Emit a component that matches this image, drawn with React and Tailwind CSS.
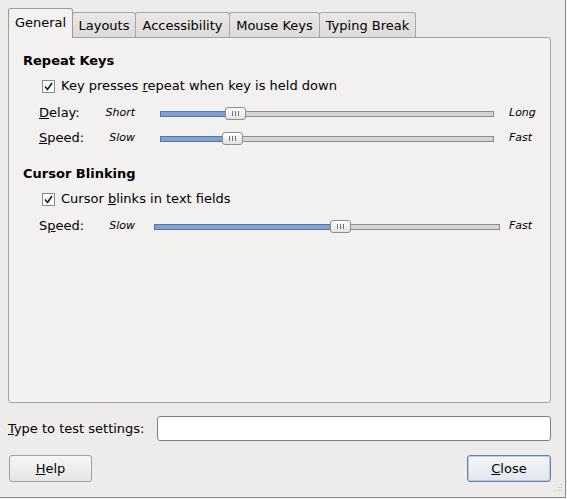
import React from 'react';

const Check = () => (
  <span className="flex h-[13px] w-[13px] items-center justify-center border border-[#8a8a8a] bg-white">
    <svg width="11" height="11" viewBox="0 0 11 11">
      <path d="M2 5.5 L4.5 8.5 L9 2" fill="none" stroke="#1a1a1a" strokeWidth="1.6" />
    </svg>
  </span>
);

const Slider = ({ width, value }) => (
  <div className="relative h-[13px]" style={{ width }}>
    <div className="absolute left-0 right-0 top-[4px] h-[6px] border border-[#8c8c8c] bg-[#d6d5d3]"></div>
    <div
      className="absolute left-0 top-[4px] h-[6px] border border-[#56779f] bg-[#7ea2d4]"
      style={{ width: value + 2 }}
    ></div>
    <div
      className="absolute top-0 flex h-[13px] w-[21px] items-center justify-center gap-[2px] rounded-[3px] border border-[#8e8e8e] bg-gradient-to-b from-white to-[#e4e3e1]"
      style={{ left: value }}
    >
      <span className="h-[5px] w-px bg-[#6f6f6f]"></span>
      <span className="h-[5px] w-px bg-[#6f6f6f]"></span>
      <span className="h-[5px] w-px bg-[#6f6f6f]"></span>
    </div>
  </div>
);

const tabs = [
  { name: 'Layouts', w: 'w-[64px]' },
  { name: 'Accessibility', w: 'w-[95px]' },
  { name: 'Mouse Keys', w: 'w-[91px]' },
  { name: 'Typing Break', w: 'w-[97px]' },
];

const App = () => {
  return (
    <div
      className="h-[499px] w-[567px] overflow-hidden bg-[#f4f3f2] text-[13px] text-black"
      style={{ fontFamily: '"DejaVu Sans", Verdana, sans-serif' }}
    >
      <div className="h-[498px] w-[566px] border-b border-r border-[#8a8a8a] bg-[#edeceb] pt-[8px]">
        {/* Tabs */}
        <div className="flex items-end pl-[8px]">
          <div className="relative z-10 -mb-px flex h-[30px] w-[65px] items-center justify-center rounded-t-[3px] border border-b-0 border-[#9c9c9c] bg-[#f3f2f1] pb-[2px]">
            General
          </div>
          {tabs.map((t) => (
            <div
              key={t.name}
              className={`flex h-[25px] ${t.w} -ml-px items-center justify-center rounded-t-[3px] border border-b-0 border-[#a8a8a8] bg-gradient-to-b from-[#e9e8e7] to-[#dcdbda] pt-px`}
            >
              {t.name}
            </div>
          ))}
        </div>

        {/* Panel */}
        <div className="ml-[8px] h-[366px] w-[543px] rounded-b-[3px] rounded-tr-[3px] border border-[#a3a3a3] bg-[#f2f1f0] pt-[14px]">
          <div className="flex h-[18px] items-center pl-[14px] font-bold">Repeat Keys</div>
          <div className="mt-[5px] flex h-[22px] items-center pl-[33px]">
            <Check />
            <span className="ml-[6px]">
              Key presses <u>r</u>epeat when key is held down
            </span>
          </div>
          <div className="mt-[4px] flex h-[24px] items-center pl-[30px]">
            <span className="w-[61px]">
              <u>D</u>elay:
            </span>
            <span className="w-[35px] text-right text-[11px] italic">Short</span>
            <div className="ml-[25px]">
              <Slider width={334} value={65} />
            </div>
            <span className="ml-[15px] text-[11px] italic">Long</span>
          </div>
          <div className="mt-px flex h-[24px] items-center pl-[30px]">
            <span className="w-[61px]">
              <u>S</u>peed:
            </span>
            <span className="w-[35px] text-right text-[11px] italic">Slow</span>
            <div className="ml-[25px]">
              <Slider width={334} value={62} />
            </div>
            <span className="ml-[15px] text-[11px] italic">Fast</span>
          </div>

          <div className="mt-[15px] flex h-[18px] items-center pl-[14px] font-bold">Cursor Blinking</div>
          <div className="mt-[5px] flex h-[22px] items-center pl-[33px]">
            <Check />
            <span className="ml-[6px]">
              Cursor <u>b</u>links in text fields
            </span>
          </div>
          <div className="mt-[4px] flex h-[24px] items-center pl-[30px]">
            <span className="w-[61px]">
              S<u>p</u>eed:
            </span>
            <span className="w-[35px] text-right text-[11px] italic">Slow</span>
            <div className="ml-[19px]">
              <Slider width={346} value={176} />
            </div>
            <span className="ml-[9px] text-[11px] italic">Fast</span>
          </div>
        </div>

        {/* Test field */}
        <div className="mt-[13px] flex h-[25px] items-center pl-[8px]">
          <span className="w-[149px]">
            <u>T</u>ype to test settings:
          </span>
          <div className="h-[25px] w-[394px] rounded-[3px] border border-[#7f7f7f] bg-white"></div>
        </div>

        {/* Buttons */}
        <div className="mt-[14px] flex items-center justify-between pl-[9px] pr-[14px]">
          <button className="flex h-[27px] w-[83px] items-center justify-center rounded-[3px] border border-[#a0a0a0] bg-gradient-to-b from-[#f7f6f5] to-[#e6e5e4]">
            <span>
              <u>H</u>elp
            </span>
          </button>
          <button className="flex h-[27px] w-[84px] items-center justify-center rounded-[3px] border border-[#5e84b6] bg-gradient-to-b from-[#f4f6f9] to-[#e2e6ec] shadow-[inset_0_0_0_1px_#b7cbe6]">
            <span>
              <u>C</u>lose
            </span>
          </button>
        </div>
        <div className="relative">
          <svg className="absolute right-[2px] top-[2px]" width="10" height="10" viewBox="0 0 10 10">
            <g fill="#a6a6a6">
              <rect x="8" y="0" width="1" height="1" />
              <rect x="5" y="3" width="1" height="1" />
              <rect x="8" y="3" width="1" height="1" />
              <rect x="2" y="6" width="1" height="1" />
              <rect x="5" y="6" width="1" height="1" />
              <rect x="8" y="6" width="1" height="1" />
            </g>
          </svg>
        </div>
      </div>
    </div>
  );
};

export default App;
